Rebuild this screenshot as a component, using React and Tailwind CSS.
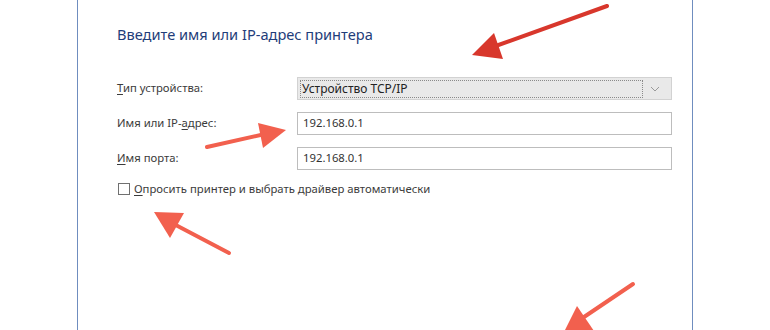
import React from "react";

function Arrows() {
  return (
    <svg className="pointer-events-none absolute left-0 top-0" width="770" height="330" viewBox="0 0 770 330">
      <line x1="607" y1="6" x2="490" y2="48" stroke="#d8372c" strokeWidth="4" strokeLinecap="round" />
      <polygon points="472,55 494,33 503,59" fill="#d8372c" />
      <line x1="207" y1="147" x2="265" y2="134" stroke="#f2604e" strokeWidth="4" strokeLinecap="round" />
      <polygon points="286,130 258,123 263,148" fill="#f2604e" />
      <line x1="229" y1="253" x2="170" y2="222" stroke="#f2604e" strokeWidth="4" strokeLinecap="round" />
      <polygon points="154,212 184,213 170,238" fill="#f2604e" />
      <line x1="633" y1="284" x2="584" y2="317" stroke="#f2604e" strokeWidth="4" strokeLinecap="round" />
      <polygon points="562,336 577,306 594,331" fill="#f2604e" />
    </svg>
  );
}

export default function App() {
  const font = { fontFamily: '"Noto Sans", "Open Sans", sans-serif' };
  return (
    <div className="relative h-[330px] w-[770px] overflow-hidden bg-white" style={font}>
      <div className="ml-[77px] h-[330px] w-[616px] border-x border-[#6f8dbf] bg-white pl-[39px]">
        <div className="pt-[24px] text-[14.6px] leading-[20px] text-[#1f3d7a]">
          Введите имя или IP-адрес принтера
        </div>
        <div className="mt-[33px] flex flex-col gap-[12px] text-[11.3px] text-[#3b3b3b]">
          <div className="flex h-[23px] items-center">
            <div className="w-[180px]"><span className="underline underline-offset-2">Т</span>ип устройства:</div>
            <div className="flex h-[23px] w-[375px] items-center border border-[#d2d2d2] bg-[#e9e9e9] pl-[2px] pr-[6px]">
              <div className="flex h-[18px] flex-1 items-center border border-dotted border-[#8a8a8a] pl-[1px] text-[12px] text-[#222]">
                Устройство TCP/IP
              </div>
              <svg width="20" height="10" viewBox="0 0 20 10" className="ml-[2px]">
                <path d="M6 3 L10 7 L14 3" fill="none" stroke="#9a9a9a" strokeWidth="1" />
              </svg>
            </div>
          </div>
          <div className="flex h-[23px] items-center">
            <div className="w-[180px]">Имя или IP-<span className="underline underline-offset-2">а</span>дрес:</div>
            <div className="flex h-[23px] w-[375px] items-center border border-[#bdbdbd] bg-white pl-[5px] text-[#333]">
              192.168.0.1
            </div>
          </div>
          <div className="flex h-[23px] items-center">
            <div className="w-[180px]"><span className="underline underline-offset-2">И</span>мя порта:</div>
            <div className="flex h-[23px] w-[375px] items-center border border-[#bdbdbd] bg-white pl-[5px] text-[#333]">
              192.168.0.1
            </div>
          </div>
          <div className="-mt-[1px] flex items-center">
            <div className="ml-[1px] h-[12px] w-[12px] border border-[#707070] bg-white" />
            <div className="ml-[4px]"><span className="underline underline-offset-2">О</span>просить принтер и выбрать драйвер автоматически</div>
          </div>
        </div>
      </div>
      <Arrows />
    </div>
  );
}
